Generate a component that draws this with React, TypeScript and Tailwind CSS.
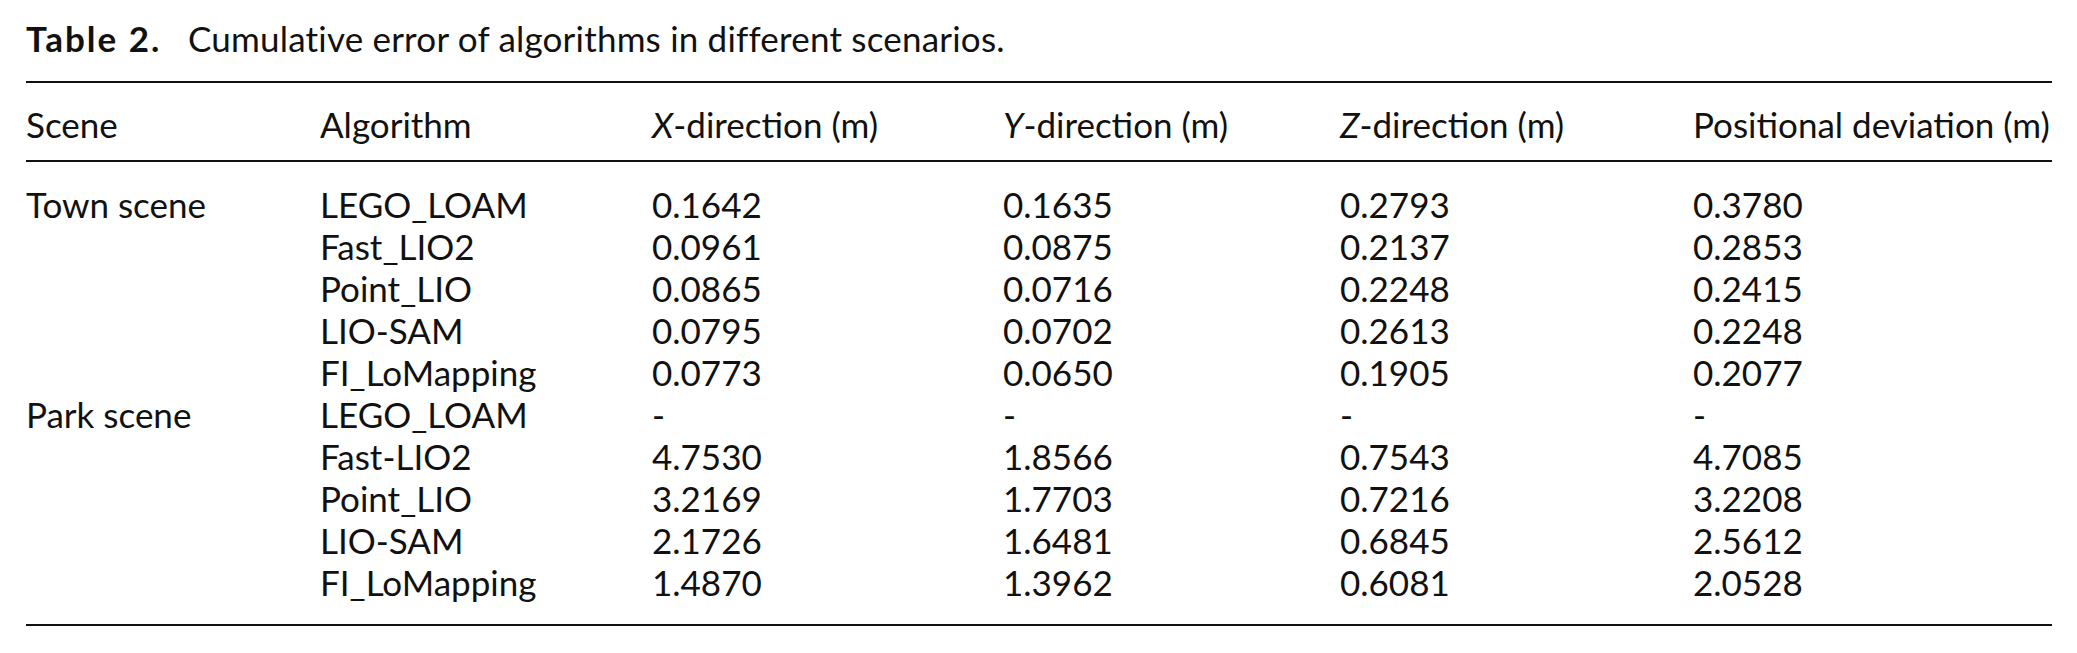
import React from "react";

const rows: string[][] = [
  ["Town scene", "LEGO_LOAM", "0.1642", "0.1635", "0.2793", "0.3780"],
  ["", "Fast_LIO2", "0.0961", "0.0875", "0.2137", "0.2853"],
  ["", "Point_LIO", "0.0865", "0.0716", "0.2248", "0.2415"],
  ["", "LIO-SAM", "0.0795", "0.0702", "0.2613", "0.2248"],
  ["", "FI_LoMapping", "0.0773", "0.0650", "0.1905", "0.2077"],
  ["Park scene", "LEGO_LOAM", "-", "-", "-", "-"],
  ["", "Fast-LIO2", "4.7530", "1.8566", "0.7543", "4.7085"],
  ["", "Point_LIO", "3.2169", "1.7703", "0.7216", "3.2208"],
  ["", "LIO-SAM", "2.1726", "1.6481", "0.6845", "2.5612"],
  ["", "FI_LoMapping", "1.4870", "1.3962", "0.6081", "2.0528"],
];

const grid = "grid grid-cols-[294px_332px_351px_337px_353px_1fr]";

export default function App() {
  return (
    <div
      className="w-[2077px] h-[653px] bg-white text-[#111] overflow-hidden"
      style={{ fontFamily: "Lato, 'Open Sans', sans-serif" }}
    >
      <div className="ml-[26px] w-[2026px] text-[35px]">
        <div className="pt-[17px] h-[81px] leading-[42px] flex">
          <span className="font-bold w-[162px] shrink-0 tracking-[2px]">Table 2.</span>
          <span className="tracking-[0.2px]">Cumulative error of algorithms in different scenarios.</span>
        </div>
        <div className="h-[2px] bg-[#111]" />
        <div className={`${grid} pt-[20px] pb-[15px] leading-[42px]`}>
          <div>Scene</div>
          <div>Algorithm</div>
          <div><i>X</i>-direction (m)</div>
          <div><i>Y</i>-direction (m)</div>
          <div><i>Z</i>-direction (m)</div>
          <div>Positional deviation (m)</div>
        </div>
        <div className="h-[2px] bg-[#111]" />
        <div className="pt-[21px] pb-[21px]">
          {rows.map((r, i) => (
            <div key={i} className={`${grid} leading-[42px]`}>
              {r.map((c, j) => (
                <div key={j}>{c}</div>
              ))}
            </div>
          ))}
        </div>
        <div className="h-[2px] bg-[#111]" />
      </div>
    </div>
  );
}
